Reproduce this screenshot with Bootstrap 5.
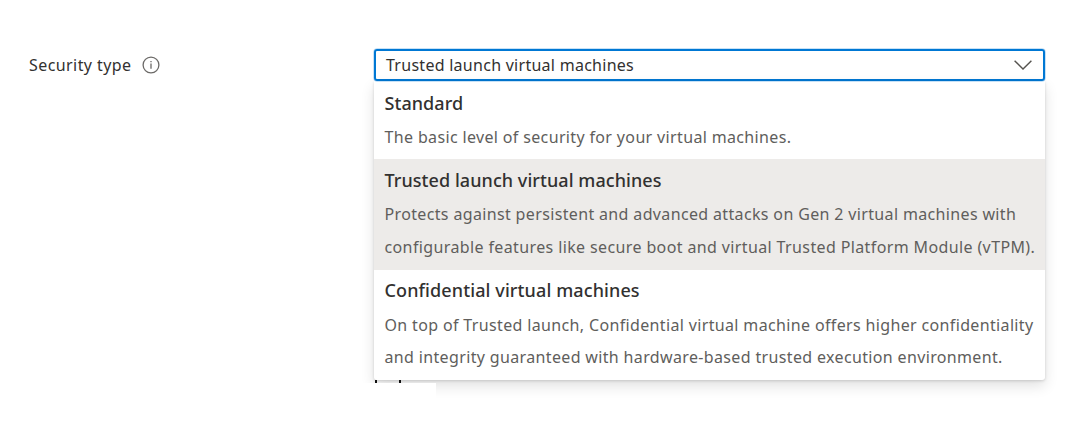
<!DOCTYPE html>
<html lang="en">
<head>
<meta charset="utf-8">
<meta name="viewport" content="width=device-width, initial-scale=1">
<title>Security type</title>
<link href="https://cdn.jsdelivr.net/npm/bootstrap@5.3.0/dist/css/bootstrap.min.css" rel="stylesheet">
<style>
body{font-family:"Noto Sans",sans-serif;font-size:16px;color:#323130;background:#fff}
.field-row{padding:49px 38px 0 29px}
.field-label{width:345px;height:32px;letter-spacing:.42px}
.info-icon{margin-left:11px}
.picker{width:671px}
.picker-box{height:32px;border:2px solid #0078d4;outline:1px solid rgba(0,120,212,.22);border-radius:3px;padding:0 11px 0 10px;letter-spacing:.27px;background:#fff}
.picker-menu{border-radius:0 0 3px 3px;box-shadow:0 6px 14px rgba(0,0,0,.12),0 1px 3px rgba(0,0,0,.15)}
.option{padding:5px 0 6.5px 10.5px;white-space:nowrap}
.option:first-child{padding-top:6px;padding-bottom:5.5px}
.option:last-child{padding-top:4.5px;padding-bottom:6.5px}
.option.selected{background:#edebe9}
.option-title{font-weight:500;font-size:18px;line-height:32px;margin-bottom:2px;letter-spacing:.06px}
.option:last-child .option-title{letter-spacing:.11px;margin-bottom:2.6px}
.option-text{color:#605e5c;line-height:32.5px;letter-spacing:.352px}
.option-text.loose{letter-spacing:.378px}
/* content underneath that shows just below the menu's left corner */
.under-edge{left:-20px;top:334px;width:82px;height:22px;background:#fff}
.under-edge i{position:absolute;top:-3px;width:1.5px;height:3px;background:#111}
.under-edge i:first-child{left:21px}
.under-edge i:last-child{left:45px}
</style>
</head>
<body>
<main class="field-row d-flex align-items-start min-vh-100">
  <label class="field-label d-flex align-items-center">Security type
    <svg class="info-icon" width="18" height="18" viewBox="0 0 18 18" fill="none" stroke="#6b6967"><circle cx="9" cy="9" r="7.9" stroke-width="1.3"/><path d="M9 7.4v5.4M9 4.9v1.3" stroke-width="1.3"/></svg>
  </label>
  <div class="picker position-relative">
    <div class="picker-box d-flex align-items-center justify-content-between">
      <span>Trusted launch virtual machines</span>
      <svg width="18" height="10" viewBox="0 0 18 10" fill="none" stroke="#55534f" stroke-width="1.4"><path d="M.6.7 9 9 17.4.7"/></svg>
    </div>
    <div class="picker-menu">
      <div class="option">
        <div class="option-title">Standard</div>
        <div class="option-text">The basic level of security for your virtual machines.</div>
      </div>
      <div class="option selected">
        <div class="option-title">Trusted launch virtual machines</div>
        <div class="option-text">Protects against persistent and advanced attacks on Gen 2 virtual machines with</div>
        <div class="option-text loose">configurable features like secure boot and virtual Trusted Platform Module (vTPM).</div>
      </div>
      <div class="option">
        <div class="option-title">Confidential virtual machines</div>
        <div class="option-text">On top of Trusted launch, Confidential virtual machine offers higher confidentiality</div>
        <div class="option-text">and integrity guaranteed with hardware-based trusted execution environment.</div>
      </div>
    </div>
    <div class="under-edge position-absolute"><i></i><i></i></div>
  </div>
</main>
</body>
</html>
